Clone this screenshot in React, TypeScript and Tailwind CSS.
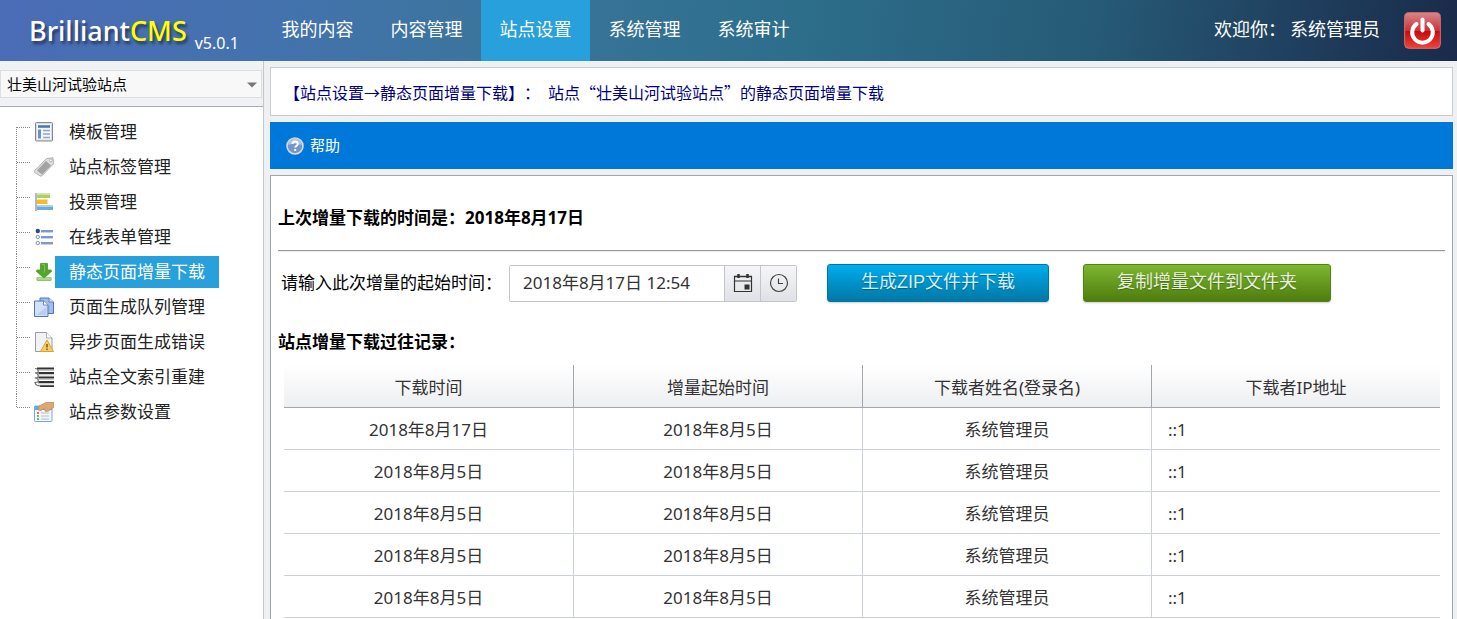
import React from "react";

const NAV_ITEMS = ["我的内容", "内容管理", "站点设置", "系统管理", "系统审计"];

const TemplateIcon = () => (
  <svg className="w-5 h-5" viewBox="0 0 20 20">
    <rect x="1.5" y=".5" width="17" height="18.500" rx="1" fill="#d9dbde" stroke="#85898f" />
    <rect x="3" y="2" width="14" height="15.500" fill="#f4f6f9" />
    <path d="M4 4.500h12" stroke="#4d78b8" strokeWidth="2.600" />
    <path d="M5.500 7.500v9" stroke="#6a90cb" strokeWidth="3" />
    <path d="M9 8.500h7M9 12h7M9 15.500h7" stroke="#8ba6cf" strokeWidth="1.500" />
  </svg>
);

const TagIcon = () => (
  <svg className="w-5 h-5" viewBox="0 0 20 20">
    <path d="M.8 13.500 12.500 1.500 19 .8l.5 6L8 18.800Q7 19.600 6 18.800L.8 15.500Q0 14.500.8 13.500Z" fill="#dedede" stroke="#a9a9a9" strokeWidth=".9" />
    <path d="m3 13.500 9-9.500 5 4.500-9 9Z" fill="#a2a2a2" />
    <circle cx="16.800" cy="3.500" r="1.300" fill="#fff" stroke="#aaa" strokeWidth=".8" />
  </svg>
);

const VoteIcon = () => (
  <svg className="w-5 h-5" viewBox="0 0 20 20">
    <path d="M2 1v18" stroke="#a3a8ae" strokeWidth="1.600" />
    <rect x="3" y="1.500" width="13" height="4.500" fill="#a5d06c" />
    <rect x="3" y="7.500" width="10.500" height="4.500" fill="#f6bd20" />
    <rect x="3" y="13.500" width="16" height="4.500" fill="#6fa9d5" />
    <path d="M3 2.500h13M3 14.500h16" stroke="#fff" strokeOpacity=".4" />
  </svg>
);

const FormIcon = () => (
  <svg className="w-5 h-5" viewBox="0 0 20 20">
    <path d="M7 4h12M7 10h12M7 16h12" stroke="#7d98ca" strokeWidth="2.200" />
    <path d="M7 5.500h12M7 11.500h12M7 17.500h12" stroke="#c8d3ea" />
    <circle cx="3.800" cy="4" r="2.200" fill="#294b8d" />
    <circle cx="3.800" cy="10" r="1.700" fill="#fff" stroke="#7c8fb5" />
    <circle cx="3.800" cy="16" r="1.700" fill="#fff" stroke="#7c8fb5" />
  </svg>
);

const DownloadIcon = () => (
  <svg className="w-5 h-5" viewBox="0 0 20 20">
    <path d="M3 15v3.500h14V15" fill="#a9d58c" stroke="#8cc46b" />
    <path d="M6.500 1.500h7v6.500H17q1 .5.500 1.500L10 16 2.500 9.500Q2 8.500 3 8h3.500Z" fill="#4fa82a" stroke="#4a9a2a" strokeWidth=".8" />
    <path d="M8 2.500h2.500v8" stroke="#7cc655" fill="none" />
  </svg>
);

const PagesIcon = () => (
  <svg className="w-5 h-5" viewBox="0 0 20 20">
    <path d="M6 1h9l4.500 4v11.500H6Z" fill="#9fbdec" stroke="#4f75bb" />
    <path d="M15 1v4h4.500" fill="#dce8fa" stroke="#4f75bb" strokeWidth=".8" />
    <path d="M.5 4h9l4.500 4v11.500H.5Z" fill="#d2e1f8" stroke="#4f75bb" />
    <path d="M9.500 4v4H14" fill="#fff" stroke="#4f75bb" strokeWidth=".8" />
    <path d="M2.500 18 12.500 10v8Z" fill="#b7cdf2" />
  </svg>
);

const PageErrorIcon = () => (
  <svg className="w-5 h-5" viewBox="0 0 20 20">
    <path d="M1.500.5h11L18 6v13.500H1.500Z" fill="#f1f2f3" stroke="#999da3" />
    <path d="M12.500.5V6H18" fill="#fff" stroke="#999da3" strokeWidth=".8" />
    <path d="m13 8 6.500 11.500h-13Z" fill="#f9cf5c" stroke="#d9a03a" strokeLinejoin="round" />
    <path d="M13 12v3.500M13 16.500V18" stroke="#725013" strokeWidth="1.400" />
  </svg>
);

const IndexIcon = () => (
  <svg className="w-5 h-5" viewBox="0 0 20 20">
    <path d="M3 1.500h17M4.500 6H20M4.500 10.500H20M4.500 15H20M6 19.200h14" stroke="#333" strokeWidth="1.800" />
    <path d="M4 3.300h16M4 7.800h16M4 12.300h16M4 16.800h16" stroke="#bbb" />
    <path d="M1 1.500q4 .5 3 4-2 0-3 .5 4 0 3 4.500-2 0-3 .5 4 0 3 4-2 0-3 .5.5 3.500 6 3.500" fill="none" stroke="#666" strokeWidth="1.200" />
  </svg>
);

const SettingsIcon = () => (
  <svg className="w-5 h-5" viewBox="0 0 20 20">
    <rect x=".5" y="4" width="17.500" height="15.500" rx="1" fill="#f3f8fd" stroke="#7aa8d4" />
    <path d="M.5 4H18v4H.5Z" fill="#6aa7e0" />
    <path d="M7 11h8M7 14h8M7 17h8" stroke="#b3bcc6" />
    <path d="M3 11h2" stroke="#e0705d" strokeWidth="1.800" />
    <path d="M3 14h2M3 17h2" stroke="#75b35b" strokeWidth="1.800" />
    <path d="M20 .5h-8L5 4 4 8l3 .5 3-2L11.500 9.500l3-.5L20 5Z" fill="#dca871" stroke="#c08d5b" strokeWidth=".8" />
  </svg>
);

const MENU_ITEMS = [
  { label: "模板管理", Icon: TemplateIcon },
  { label: "站点标签管理", Icon: TagIcon },
  { label: "投票管理", Icon: VoteIcon },
  { label: "在线表单管理", Icon: FormIcon },
  { label: "静态页面增量下载", Icon: DownloadIcon },
  { label: "页面生成队列管理", Icon: PagesIcon },
  { label: "异步页面生成错误", Icon: PageErrorIcon },
  { label: "站点全文索引重建", Icon: IndexIcon },
  { label: "站点参数设置", Icon: SettingsIcon },
];

const COLUMNS = ["下载时间", "增量起始时间", "下载者姓名(登录名)", "下载者IP地址"];

const RECORDS = [
  { time: "2018年8月17日", start: "2018年8月5日", user: "系统管理员", ip: "::1" },
  { time: "2018年8月5日", start: "2018年8月5日", user: "系统管理员", ip: "::1" },
  { time: "2018年8月5日", start: "2018年8月5日", user: "系统管理员", ip: "::1" },
  { time: "2018年8月5日", start: "2018年8月5日", user: "系统管理员", ip: "::1" },
  { time: "2018年8月5日", start: "2018年8月5日", user: "系统管理员", ip: "::1" },
];

// Dotted connector drawn in front of each tree node
const TreeLine = ({ first, last }: { first: boolean; last: boolean }) => (
  <svg className="w-[14px] h-[35px] shrink-0" viewBox="0 0 14 35" stroke="#888" strokeDasharray="1 1">
    <path d={`M.5 ${first ? 13 : 0}V${last ? 13 : 35}`} />
    <path d="M1 13.5H14" />
  </svg>
);

const Header = () => (
  <header className="flex h-[61px] shrink-0 items-center bg-[linear-gradient(100deg,#4b6cb7_0%,#4472ae_18%,#3a759b_35%,#2d6e8b_55%,#265a76_75%,#1f3d5c_90%,#1a2a4a_100%)] text-lg text-white">
    <div className="flex w-[263px] shrink-0 items-center pl-[29px]">
      <span className="font-['Noto_Sans'] text-[27px] font-medium leading-[57px] [text-shadow:2px_3px_3px_rgba(0,0,0,0.5)]">
        Brilliant<span className="text-[#ffff00]">CMS</span>
      </span>
      <span className="ml-2 pt-6 text-base leading-none">v5.0.1</span>
    </div>
    <nav className="flex h-full">
      {NAV_ITEMS.map((item, index) => (
        <a
          key={item}
          href="#"
          className={`flex w-[109px] items-center justify-center pb-[3px] ${index === 2 ? "bg-[#27a0dc]" : ""}`}
        >
          {item}
        </a>
      ))}
    </nav>
    <div className="ml-auto flex items-center pr-4">
      <span className="pb-[3px]">欢迎你：</span>
      <a href="#" className="mr-6 ml-1 pb-[3px]">系统管理员</a>
      <button aria-label="退出" className="h-[37px] w-[37px]">
        <svg viewBox="0 0 37 37">
          <defs>
            <linearGradient id="power" x1="0" y1="0" x2="0" y2="1">
              <stop offset="0" stopColor="#d7878b" />
              <stop offset=".5" stopColor="#cd3136" />
              <stop offset=".52" stopColor="#c30b0d" />
              <stop offset="1" stopColor="#ee443a" />
            </linearGradient>
          </defs>
          <rect x=".7" y=".7" width="35.600" height="35.600" rx="4" fill="url(#power)" stroke="#d37376" />
          <path d="M12.500 12a10.300 10.300 0 1 0 12 0" fill="none" stroke="#fff" strokeWidth="4" strokeLinecap="round" />
          <path d="M18.500 7.500v11" stroke="#fff" strokeWidth="4" strokeLinecap="round" />
        </svg>
      </button>
    </div>
  </header>
);

const Sidebar = () => (
  <aside className="flex w-[264px] shrink-0 flex-col border-r border-[#c3c6cb] bg-white">
    <div className="border-b border-[#a9acb2] bg-[#eff1f5] pt-[9px] pr-px pb-2">
      <div className="relative">
        <select
          aria-label="站点"
          className="h-7 w-full appearance-none border border-[#dcdee2] bg-[#f8f8f8] pl-[6px] text-[15px] text-black"
        >
          <option>壮美山河试验站点</option>
        </select>
        <svg className="pointer-events-none absolute top-3 right-[5px] h-[6px] w-[10px]" viewBox="0 0 10 6">
          <path d="M0 .5h10L5 5.500Z" fill="#777" />
        </svg>
      </div>
    </div>
    <ul className="pt-[7px] pl-4 text-[17px] text-[#222]">
      {MENU_ITEMS.map(({ label, Icon }, index) => (
        <li key={label} className="flex h-[35px] items-center">
          <TreeLine first={index === 0} last={index === MENU_ITEMS.length - 1} />
          <span className="mr-[1px] ml-1 shrink-0">
            <Icon />
          </span>
          <a
            href="#"
            className={`flex h-8 items-center px-[14px] ${index === 4 ? "bg-[#27a0dc] text-white" : ""}`}
          >
            {label}
          </a>
        </li>
      ))}
    </ul>
  </aside>
);

const DownloadForm = () => (
  <form className="flex items-center pt-3 pl-[3px]" onSubmit={(e) => e.preventDefault()}>
    <label htmlFor="start-time" className="shrink-0 text-[17px] text-black">
      请输入此次增量的起始时间：
    </label>
    <div className="ml-[7px] flex h-[37px] w-[288px] shrink-0 overflow-hidden rounded-[2px] border border-[#c3c5c9]">
      <input
        id="start-time"
        type="text"
        defaultValue="2018年8月17日 12:54"
        className="min-w-0 flex-1 bg-white pl-[13px] text-[17px] text-[#333] outline-none"
      />
      <button
        type="button"
        aria-label="选择日期"
        className="flex w-9 items-center justify-center border-l border-[#c3c5c9] bg-linear-to-b from-[#f6f6f8] to-[#dfe1e6]"
      >
        <svg className="h-5 w-5" viewBox="0 0 20 20" fill="none" stroke="#333">
          <path d="M1.500 3.500h17v15h-17ZM1.500 8h17" strokeWidth="1.200" />
          <path d="M5.500 1v4M14.500 1v4" strokeWidth="2.500" />
          <path d="M1 3.500h18" strokeWidth="1.600" />
          <rect x="12" y="12" width="4" height="4" fill="#333" />
        </svg>
      </button>
      <button
        type="button"
        aria-label="选择时间"
        className="flex w-9 items-center justify-center border-l border-[#c3c5c9] bg-linear-to-b from-[#f6f6f8] to-[#dfe1e6]"
      >
        <svg className="h-5 w-5" viewBox="0 0 20 20" fill="none" stroke="#444" strokeWidth="1.200">
          <circle cx="10" cy="10" r="8.500" />
          <path d="M9.500 5.500v5H14" />
        </svg>
      </button>
    </div>
    <button className="ml-[30px] h-[38px] w-[222px] shrink-0 rounded-[3px] border border-[#0076a3] bg-linear-to-b from-[#00adee] to-[#0078a5] pb-[2px] font-['Liberation_Sans','Noto_Sans_CJK_SC',sans-serif] text-lg leading-none text-[#d9eef7] shadow-[0_1px_2px_rgba(0,0,0,0.2)] [text-shadow:0_1px_1px_rgba(0,0,0,0.3)]">
      生成ZIP文件并下载
    </button>
    <button className="ml-[34px] h-[38px] w-[248px] shrink-0 rounded-[3px] border border-[#538312] bg-linear-to-b from-[#7db72f] to-[#4e7d0e] pb-[2px] font-['Liberation_Sans','Noto_Sans_CJK_SC',sans-serif] text-lg leading-none text-[#e8f0de] shadow-[0_1px_2px_rgba(0,0,0,0.2)] [text-shadow:0_1px_1px_rgba(0,0,0,0.3)]">
      复制增量文件到文件夹
    </button>
  </form>
);

const RecordTable = () => (
  <div className="pr-[5px] pl-[6px]">
    <table className="w-full table-fixed border-separate border-spacing-0 text-[17px] text-[#333]">
      <thead>
        <tr className="h-[43px] bg-linear-to-b from-white to-[#edeef1]">
          {COLUMNS.map((column) => (
            <th key={column} className="border-b border-l border-[#a3a6ad] pt-1 font-normal first:border-l-0">
              {column}
            </th>
          ))}
        </tr>
      </thead>
      <tbody>
        {RECORDS.map((record, index) => (
          <tr key={index} className="h-[42px] text-center">
            <td className="border-b border-[#ccd0d9] pt-[3px]">{record.time}</td>
            <td className="border-b border-l border-[#ccd0d9] pt-[3px]">{record.start}</td>
            <td className="border-b border-l border-[#ccd0d9] pt-[3px]">{record.user}</td>
            <td className="border-b border-l border-[#ccd0d9] pt-[3px] pl-4 text-left">{record.ip}</td>
          </tr>
        ))}
      </tbody>
    </table>
  </div>
);

const App = () => {
  return (
    <div
      lang="zh-CN"
      className="flex min-h-screen flex-col bg-[#eff0f2] font-['Noto_Sans','Noto_Sans_CJK_SC',sans-serif]"
    >
      <Header />
      <div className="flex flex-1">
        <Sidebar />
        <main className="flex min-w-0 flex-1 flex-col gap-[6px] pt-[6px] pr-1 pl-[6px]">
          <div className="flex h-[49px] items-center gap-2 border border-[#c9ccd1] bg-white pl-[13px] font-['Noto_Sans_CJK_SC',sans-serif] text-base text-[#000080] [text-spacing-trim:space-all]">
            <span>【站点设置→静态页面增量下载】：</span>
            <span>站点“壮美山河试验站点”的静态页面增量下载</span>
          </div>
          <div className="flex h-[47px] items-center bg-[#0078d9] pl-4 text-white">
            <a href="#" className="flex items-center gap-[6px] text-[15px]">
              <svg className="h-[18px] w-[18px]" viewBox="0 0 18 18">
                <circle cx="9" cy="9" r="8" fill="#7896c5" stroke="#d3dbe6" strokeWidth="1.600" />
                <path d="M2.500 8a6.500 6.500 0 0 1 13 0Q9 5 2.500 8Z" fill="#b3c5df" />
                <path d="M6.500 7q.2-2.500 2.700-2.500T11.800 7c0 1.600-2.600 1.800-2.600 3.600M9.200 12v2" fill="none" stroke="#fff" strokeWidth="1.900" />
              </svg>
              帮助
            </a>
          </div>
          <section className="flex-1 border border-b-0 border-[#a0a3a9] bg-white px-[7px] text-black">
            <h2 className="pt-[30px] text-[17px] leading-6 font-bold">上次增量下载的时间是：2018年8月17日</h2>
            <hr className="mt-5 h-[2px] border-t border-b border-t-[#999] border-b-[#eee]" />
            <DownloadForm />
            <h2 className="pt-7 pb-[11px] text-[17px] leading-6 font-bold">站点增量下载过往记录：</h2>
            <RecordTable />
          </section>
        </main>
      </div>
    </div>
  );
};

export default App;
